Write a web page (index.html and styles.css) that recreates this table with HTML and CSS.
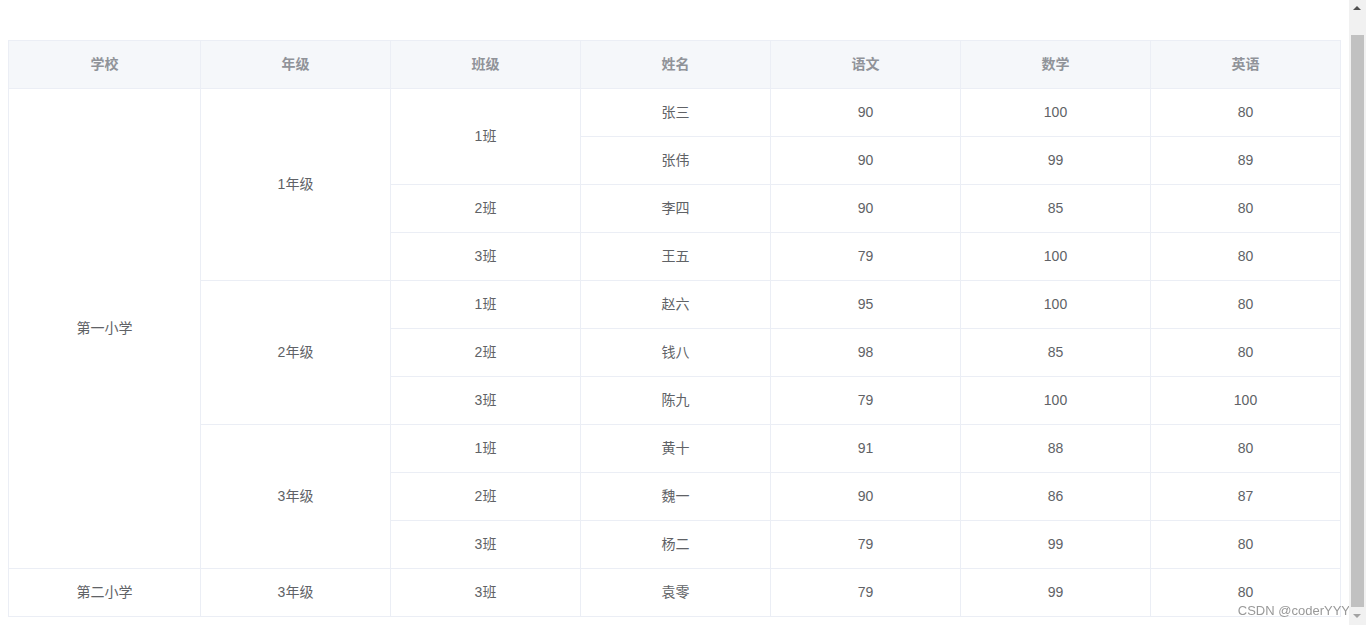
FILE: index.html
```html
<!DOCTYPE html>
<html lang="zh-CN">
<head>
    <meta charset="UTF-8">
    <meta name="viewport" content="width=device-width, initial-scale=1.0">
    <title>成绩表</title>
    <link rel="stylesheet" href="styles.css">
</head>
<body>
    <div class="table-wrap">
        <table class="score-table">
            <colgroup>
                <col class="col-first">
                <col class="col">
                <col class="col">
                <col class="col">
                <col class="col">
                <col class="col">
                <col class="col">
            </colgroup>
            <thead>
                <tr>
                    <th>学校</th>
                    <th>年级</th>
                    <th>班级</th>
                    <th>姓名</th>
                    <th>语文</th>
                    <th>数学</th>
                    <th>英语</th>
                </tr>
            </thead>
            <tbody>
                <tr>
                    <td rowspan="10">第一小学</td>
                    <td rowspan="4">1年级</td>
                    <td rowspan="2">1班</td>
                    <td>张三</td><td>90</td><td>100</td><td>80</td>
                </tr>
                <tr><td>张伟</td><td>90</td><td>99</td><td>89</td></tr>
                <tr><td>2班</td><td>李四</td><td>90</td><td>85</td><td>80</td></tr>
                <tr><td>3班</td><td>王五</td><td>79</td><td>100</td><td>80</td></tr>
                <tr>
                    <td rowspan="3">2年级</td>
                    <td>1班</td><td>赵六</td><td>95</td><td>100</td><td>80</td>
                </tr>
                <tr><td>2班</td><td>钱八</td><td>98</td><td>85</td><td>80</td></tr>
                <tr><td>3班</td><td>陈九</td><td>79</td><td>100</td><td>100</td></tr>
                <tr>
                    <td rowspan="3">3年级</td>
                    <td>1班</td><td>黄十</td><td>91</td><td>88</td><td>80</td>
                </tr>
                <tr><td>2班</td><td>魏一</td><td>90</td><td>86</td><td>87</td></tr>
                <tr><td>3班</td><td>杨二</td><td>79</td><td>99</td><td>80</td></tr>
                <tr>
                    <td>第二小学</td><td>3年级</td><td>3班</td><td>袁零</td><td>79</td><td>99</td><td>80</td>
                </tr>
            </tbody>
        </table>
    </div>
    <div class="watermark">CSDN @coderYYY</div>
    <div class="scrollbar">
        <span class="arrow up"></span>
        <span class="thumb"></span>
        <span class="arrow down"></span>
    </div>
</body>
</html>
```

FILE: styles.css
```css
html, body { margin: 0; padding: 0; overflow: hidden; }
body { padding: 8px 25px 8px 8px; background: #fff; font-family: "Liberation Sans", Arial, "Noto Sans CJK SC", sans-serif; font-size: 14px; color: #606266; }
.table-wrap { margin-top: 32px; }
.score-table { width: 1333px; table-layout: fixed; border-collapse: separate; border-spacing: 0; border-top: 1px solid #ebeef5; border-left: 1px solid #ebeef5; }
.score-table .col-first { width: 192px; }
.score-table .col { width: 190px; }
.score-table th, .score-table td { padding: 12px 0; line-height: 23px; text-align: center; border-right: 1px solid #ebeef5; border-bottom: 1px solid #ebeef5; }
.score-table th { background: #f5f7fa; color: #909399; font-weight: bold; }
.watermark { position: fixed; right: 16px; bottom: 7px; color: #999; font-size: 13px; font-family: "Liberation Sans", Arial, sans-serif; }

/* fake page scrollbar */
.scrollbar { position: fixed; top: 0; right: 0; width: 17px; height: 100%; background: #f1f1f1; }
.scrollbar .thumb { position: absolute; left: 2px; right: 2px; top: 35px; bottom: 18px; background: #c1c1c1; }
.scrollbar .arrow { position: absolute; left: 4px; width: 0; height: 0; border-left: 4px solid transparent; border-right: 4px solid transparent; }
.scrollbar .up { top: 6px; border-bottom: 4px solid #505050; }
.scrollbar .down { bottom: 7px; border-top: 4px solid #a3a3a3; }
```
